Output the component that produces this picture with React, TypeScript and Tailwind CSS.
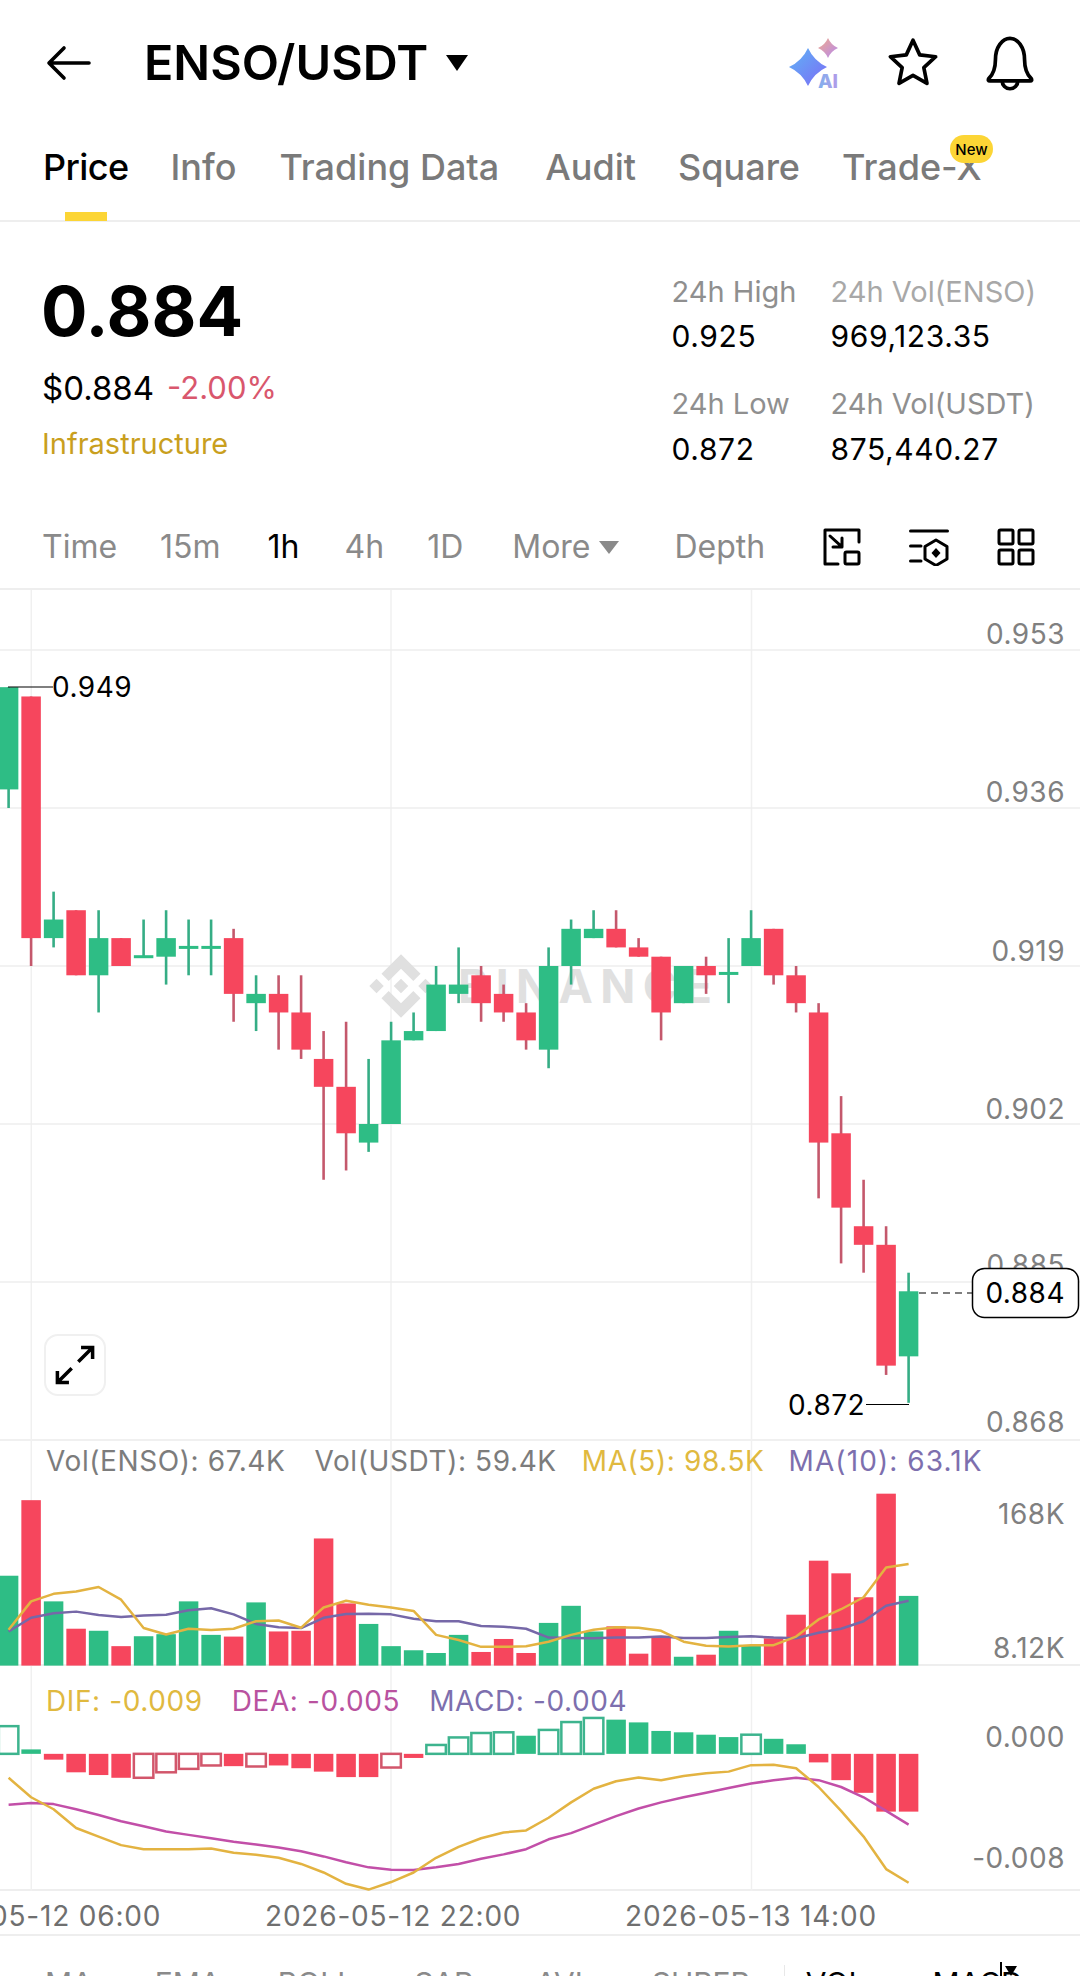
import React from 'react';

type C = [number, number, number, number, number];
// [open, close, high, low, up?1:0], prices in thousandths
const candles: C[] = [
  [938, 949, 949, 936, 1], [948, 922, 948, 919, 0], [922, 924, 927, 921, 1], [925, 918, 925, 918, 0], [918, 922, 925, 914, 1],
  [922, 919, 922, 919, 0], [920, 920, 924, 920, 1], [920, 922, 925, 917, 1], [921, 921, 924, 918, 1], [921, 921, 924, 918, 1],
  [922, 916, 923, 913, 0], [915, 916, 918, 912, 1], [916, 914, 918, 910, 0], [914, 910, 918, 909, 0], [909, 906, 912, 896, 0],
  [906, 901, 913, 897, 0], [900, 902, 909, 899, 1], [902, 911, 913, 902, 1], [911, 912, 914, 911, 1], [912, 917, 919, 912, 1],
  [916, 917, 921, 915, 1], [918, 915, 919, 913, 0], [916, 914, 917, 913, 0], [914, 911, 915, 910, 0], [910, 919, 921, 908, 1],
  [919, 923, 924, 917, 1], [922, 923, 925, 922, 1], [923, 921, 925, 921, 0], [921, 920, 922, 920, 0], [920, 914, 920, 911, 0],
  [915, 919, 919, 915, 1], [919, 918, 920, 916, 0], [918.2, 918.2, 922, 915, 1], [919, 922, 925, 919, 1], [923, 918, 923, 917, 0],
  [918, 915, 919, 914, 0], [914, 900, 915, 894, 0], [901, 893, 905, 887, 0], [891, 889, 896, 886, 0], [889, 876, 891, 875, 0],
  [877, 884, 886, 872, 1],
];
const volTops = [397, 176, 472, 552, 558, 603, 574, 568, 472, 570, 575, 475, 560, 558, 288, 478, 538, 603, 615, 623, 570, 620, 582, 623, 535, 485, 560, 545, 625, 578, 634, 628, 558, 600, 580, 511, 353, 390, 460, 157, 456];
const ma5 = [555, 472, 450, 443, 430, 467, 550, 569, 552, 556, 552, 530, 528, 549, 490, 470, 482, 490, 500, 570, 585, 605, 605, 603, 590, 570, 555, 548, 549, 558, 590, 602, 604, 600, 600, 575, 525, 495, 460, 373, 363];
const ma10 = [560, 520, 507, 502, 512, 518, 513, 511, 498, 492, 510, 538, 548, 550, 520, 509, 508, 510, 523, 530, 530, 544, 546, 552, 578, 579, 580, 578, 578, 575, 579, 579, 576, 574, 578, 580, 564, 552, 530, 485, 470];
// [value, hollow?]
const macdBars: [number, number][] = [
  [837, 1], [905, 0], [935, 0], [972, 0], [980, 0], [988, 0], [988, 1], [972, 1], [962, 1], [952, 1], [954, 0], [955, 1], [952, 0], [960, 0], [970, 0], [986, 0], [986, 0], [958, 1], [930, 0],
  [892, 1], [870, 1], [857, 1], [855, 1], [865, 0], [848, 1], [825, 1], [813, 1], [818, 0], [826, 0], [851, 0], [855, 0], [862, 0], [869, 0], [862, 1], [874, 0], [890, 0], [943, 0], [995, 0], [1032, 0], [1087, 0], [1087, 0],
];
const dif = [988, 1045, 1080, 1135, 1160, 1185, 1197, 1197, 1197, 1195, 1207, 1213, 1222, 1240, 1265, 1298, 1315, 1293, 1265, 1222, 1190, 1165, 1148, 1142, 1105, 1060, 1020, 998, 987, 995, 983, 975, 970, 951, 950, 960, 1015, 1085, 1160, 1255, 1295];
const dea = [1067, 1062, 1065, 1080, 1097, 1115, 1130, 1145, 1155, 1165, 1175, 1183, 1192, 1203, 1218, 1235, 1250, 1257, 1258, 1250, 1240, 1225, 1212, 1197, 1168, 1150, 1125, 1100, 1078, 1060, 1045, 1032, 1018, 1005, 995, 988, 995, 1015, 1045, 1085, 1125];

const GREEN = '#2EBD85';
const RED = '#F6465D';
const WICK_G = '#35AD85';
const WICK_R = '#C4586C';
const cx = (i: number) => 8.6 + i * 22.5;
const BW = 19.5;
const priceY = (p: number) => (953 - p) * 9.294 + 60;
const subY = (v: number) => v / 2.925 - 1;
const line = (arr: number[], off: number) => arr.map((v, i) => `${cx(i)},${subY(v) - off}`).join(' ');
const FONT = 'font-["Inter","Liberation_Sans",sans-serif]';

const VLines = ({ h }: { h: number }) => (
  <g stroke="#f0f0f0" strokeWidth="1.5">
    {[31.3, 391, 751.5].map((x) => (
      <line key={x} x1={x} x2={x} y1={0} y2={h} />
    ))}
  </g>
);

const AxisLabel = ({ y, t, fill = '#808080' }: { y: number; t: string; fill?: string }) => (
  <text x={1065} y={y} textAnchor="end" dominantBaseline="central" fontSize="28" letterSpacing="0.5" fill={fill} fontFamily="Inter, sans-serif">
    {t}
  </text>
);

function MainChart() {
  return (
    <div className="relative h-[851px] w-full border-b-2 border-[#f0f0f0]">
      <svg width="1080" height="851" className="block">
        <VLines h={851} />
        <g stroke="#eeeeee" strokeWidth="1.5">
          {[649, 807, 965, 1123, 1281].map((y) => (
            <line key={y} x1={0} x2={1080} y1={y - 589} y2={y - 589} />
          ))}
        </g>
        <g transform="translate(369,364) scale(0.508)" fill="#e0e0e0">
          <path d="M38.73 53.2L63 28.93l24.28 24.28 14.12-14.12L63 .69 24.61 39.08zM.69 63l14.12-14.12L28.93 63 14.81 77.12zM38.73 72.8L63 97.07l24.28-24.28 14.12 14.12L63 125.31 24.61 86.92l-.02-.02zM97.07 63l14.12-14.12L125.31 63l-14.12 14.12zM77.32 63L63 48.68 52.41 59.27l-1.22 1.22-2.51 2.51L63 77.32z" />
        </g>
        <text x={458} y={413} fontSize="46" fontWeight="700" fill="#e0e0e0" textLength={254} fontFamily="Inter, sans-serif">
          BINANCE
        </text>
        {candles.map(([o, c, h, l, up], i) => {
          const top = priceY(Math.max(o, c));
          const bh = Math.max(Math.abs(o - c) * 9.294, 3);
          return (
            <g key={i}>
              <line x1={cx(i)} x2={cx(i)} y1={priceY(h)} y2={priceY(l)} stroke={up ? WICK_G : WICK_R} strokeWidth="2.6" />
              <rect x={cx(i) - BW / 2} y={o === c ? top - 1.5 : top} width={BW} height={bh} fill={up ? GREEN : RED} />
            </g>
          );
        })}
        <line x1={8} x2={53} y1={97} y2={97} stroke="#000" strokeWidth="1.2" />
        <text x={52} y={97} dominantBaseline="central" fontSize="28" letterSpacing="0.5" fill="#000" fontFamily="Inter, sans-serif">0.949</text>
        <line x1={866} x2={909} y1={814.5} y2={814.5} stroke="#000" strokeWidth="1.2" />
        <text x={788} y={815} dominantBaseline="central" fontSize="28" letterSpacing="0.5" fill="#000" fontFamily="Inter, sans-serif">0.872</text>
        <AxisLabel y={44} t="0.953" />
        <AxisLabel y={202} t="0.936" />
        <AxisLabel y={361} t="0.919" />
        <AxisLabel y={519} t="0.902" />
        <AxisLabel y={675} t="0.885" />
        <AxisLabel y={832} t="0.868" />
        <line x1={919} x2={972} y1={703} y2={703} stroke="#000" strokeWidth="1.2" strokeDasharray="7 5" />
        <rect x={972.5} y={678.5} width={106} height={49} rx={12} fill="#fff" stroke="#000" strokeWidth="1.5" />
        <AxisLabel y={703} t="0.884" fill="#000" />
      </svg>
      <div className="absolute left-[44px] top-[744px] flex h-[62px] w-[62px] items-center justify-center rounded-[14px] border-2 border-[#f0f0f0] bg-white">
        <svg width="44" height="44" viewBox="0 0 40 40" fill="none" stroke="#000" strokeWidth="3.2">
          <path d="M23 17L36 4M25.5 4H36V14.5M17 23L4 36M4 25.5V36H14.5" />
        </svg>
      </div>
    </div>
  );
}

function VolumePanel() {
  return (
    <div className="relative h-[225px] w-full border-b-2 border-[#eeeeee]">
      <svg width="1080" height="225" className="block">
        <VLines h={225} />
        {volTops.map((t, i) => (
          <rect key={i} x={cx(i) - BW / 2} y={subY(t)} width={BW} height={224.6 - subY(t)} fill={candles[i][4] ? GREEN : RED} />
        ))}
        <polyline points={line(ma10, 0)} fill="none" stroke="#7668A8" strokeWidth="2.5" strokeLinejoin="round" />
        <polyline points={line(ma5, 0)} fill="none" stroke="#E3B341" strokeWidth="2.5" strokeLinejoin="round" />
        <AxisLabel y={73} t="168K" />
        <AxisLabel y={207} t="8.12K" />
      </svg>
      <div className="absolute left-[46px] top-[4px] flex text-[28px] leading-[32px] tracking-[0.6px] text-[#7c7c7c]">
        <span>Vol(ENSO): 67.4K</span>
        <span className="ml-[29px]">Vol(USDT): 59.4K</span>
        <span className="ml-[25px] text-[#E0B93F]">MA(5): 98.5K</span>
        <span className="ml-[24px] tracking-[1.1px] text-[#7D6FAE]">MA(10): 63.1K</span>
      </div>
    </div>
  );
}

function MacdPanel() {
  const zero = subY(918) - 225;
  return (
    <div className="relative h-[225px] w-full border-b-2 border-[#eeeeee]">
      <svg width="1080" height="225" className="block">
        <VLines h={225} />
        {macdBars.map(([v, hollow], i) => {
          const y = subY(v) - 225;
          const top = Math.min(y, zero);
          const h = Math.abs(y - zero);
          const col = v < 918 ? GREEN : RED;
          return hollow ? (
            <rect key={i} x={cx(i) - BW / 2} y={top} width={BW} height={h} fill="#fff" stroke={v < 918 ? '#3DB48E' : '#D2566B'} strokeWidth="2.5" />
          ) : (
            <rect key={i} x={cx(i) - BW / 2} y={top} width={BW} height={h} fill={col} />
          );
        })}
        <polyline points={line(dea, 225)} fill="none" stroke="#C24FA8" strokeWidth="2.5" strokeLinejoin="round" />
        <polyline points={line(dif, 225)} fill="none" stroke="#E3B341" strokeWidth="2.5" strokeLinejoin="round" />
        <AxisLabel y={71} t="0.000" />
        <AxisLabel y={192} t="-0.008" />
      </svg>
      <div className="absolute left-[46px] top-[19px] flex gap-[29px] text-[28px] leading-[32px] tracking-[0.6px]">
        <span className="text-[#E0B93F]">DIF: -0.009</span>
        <span className="text-[#B9529F]">DEA: -0.005</span>
        <span className="text-[#7D6FAE]">MACD: -0.004</span>
      </div>
    </div>
  );
}

function AiIcon() {
  return (
    <svg width="56" height="62" viewBox="0 0 56 62">
      <defs>
        <linearGradient id="ai1" x1="0" y1="0" x2="1" y2="1">
          <stop offset="0" stopColor="#5FB4F5" />
          <stop offset="1" stopColor="#7C6CF6" />
        </linearGradient>
        <linearGradient id="ai2" x1="0" y1="0" x2="1" y2="1">
          <stop offset="0" stopColor="#F0A98C" />
          <stop offset="1" stopColor="#B58AF0" />
        </linearGradient>
        <linearGradient id="ai3" x1="0" y1="0" x2="1" y2="0">
          <stop offset="0" stopColor="#7FB1EE" />
          <stop offset="1" stopColor="#B39AE8" />
        </linearGradient>
      </defs>
      <path d="M21 16 Q27 29 40 35 Q27 41 21 54 Q15 41 2 35 Q15 29 21 16Z" fill="url(#ai1)" />
      <path d="M41 6 Q44 13 51 16 Q44 19 41 26 Q38 19 31 16 Q38 13 41 6Z" fill="url(#ai2)" />
      <text x={31} y={56} fontSize="19" fontWeight="800" fill="url(#ai3)" fontFamily="Inter, sans-serif">AI</text>
    </svg>
  );
}

export default function App() {
  return (
    <div className={`h-[1976px] w-[1080px] overflow-hidden bg-white ${FONT}`}>
      {/* top bar */}
      <div className="flex h-[126px] items-center pl-[46px] pr-[43px]">
        <svg width="46" height="36" viewBox="0 0 46 36" fill="none" stroke="#000" strokeWidth="3.6" strokeLinecap="round" strokeLinejoin="round">
          <path d="M43 18H4M18 3L3 18L18 33" />
        </svg>
        <span className="ml-[52px] text-[48.5px] font-semibold leading-none text-black">ENSO/USDT</span>
        <svg className="ml-[17px]" width="24" height="16" viewBox="0 0 24 16">
          <path d="M1 0H23L12 16Z" fill="#000" />
        </svg>
        <div className="ml-auto flex items-center">
          <AiIcon />
          <svg className="ml-[44px]" width="52" height="52" viewBox="0 0 48 48" fill="none" stroke="#000" strokeWidth="3.4" strokeLinejoin="round">
            <path d="M24 3L30.2 16.5L44.9 18.2L34 28.2L36.9 42.8L24 35.5L11.1 42.8L14 28.2L3.1 18.2L17.8 16.5Z" />
          </svg>
          <svg className="ml-[44px]" width="54" height="56" viewBox="0 0 48 50" fill="none" stroke="#000" strokeWidth="3.3" strokeLinejoin="round">
            <path d="M5 39Q11 33 11 22C11 11 17 3 24 3C31 3 37 11 37 22Q37 33 43 39Q44 41 42 41H6Q4 41 5 39Z" />
            <path d="M17 41A7 7 0 0 0 31 41" />
          </svg>
        </div>
      </div>

      {/* tabs */}
      <div className="flex h-[96px] border-b-2 border-[#eeeeee] pl-[43px] text-[36px] font-medium leading-[44px] text-[#7a7a7a]">
        <div className="relative pt-[19px] tracking-[-0.6px] text-black">
          Price
          <div className="absolute left-[22px] top-[86px] h-[9px] w-[42px] bg-[#FCD535]" />
        </div>
        <div className="ml-[42px] pt-[19px]">Info</div>
        <div className="ml-[43px] pt-[19px]">Trading Data</div>
        <div className="ml-[46px] pt-[19px]">Audit</div>
        <div className="ml-[42px] pt-[19px]">Square</div>
        <div className="relative ml-[42px] pt-[19px]">
          Trade-X
          <div className="absolute left-[108px] top-[9px] flex h-[28px] w-[43px] items-center justify-center rounded-[14px] bg-[#FCD535] text-[15px] font-medium leading-none text-black">
            New
          </div>
        </div>
      </div>

      {/* price stats */}
      <div className="flex h-[284px] justify-between pl-[41px] pr-[44px]">
        <div className="pt-[54px]">
          <div className="text-[69px] font-bold leading-[70px] text-black">0.884</div>
          <div className="ml-[1px] mt-[22px] flex items-center gap-[13px] leading-[40px]">
            <span className="text-[33px] text-black">$0.884</span>
            <span className="text-[31px] text-[#D9576D]">-2.00%</span>
          </div>
          <div className="ml-[1px] mt-[18px] text-[29px] leading-[36px] text-[#C99F1E]">Infrastructure</div>
        </div>
        <div className="grid grid-cols-[159px_auto] content-start pt-[52px] text-[29px] leading-[36px]">
          <div className="text-[#8f8f8f]">24h High</div>
          <div className="text-[#a8a8a8]">24h Vol(ENSO)</div>
          <div className="mt-[8px] text-[30px] tracking-[0.6px] text-black">0.925</div>
          <div className="mt-[8px] text-[30px] tracking-[0.6px] text-black">969,123.35</div>
          <div className="mt-[32px] text-[#8f8f8f]">24h Low</div>
          <div className="mt-[32px] text-[#8f8f8f]">24h Vol(USDT)</div>
          <div className="mt-[9px] text-[30px] tracking-[0.6px] text-black">0.872</div>
          <div className="mt-[9px] text-[30px] tracking-[0.6px] text-black">875,440.27</div>
        </div>
      </div>

      {/* interval row */}
      <div className="flex h-[84px] items-center border-b-2 border-[#eeeeee] pl-[42px] pr-[45px] text-[32px] leading-none text-[#8a8a8a]">
        <span>Time</span>
        <span className="ml-[43px]">15m</span>
        <span className="ml-[47px] text-black">1h</span>
        <span className="ml-[45px]">4h</span>
        <span className="ml-[43px]">1D</span>
        <span className="ml-[49px]">More</span>
        <svg className="ml-[8px]" width="20" height="13" viewBox="0 0 20 13">
          <path d="M0 0H20L10 13Z" fill="#8a8a8a" />
        </svg>
        <span className="ml-[56px]">Depth</span>
        <div className="ml-auto flex items-center gap-[48px]">
          <svg width="38" height="38" viewBox="0 0 38 38" fill="none" stroke="#000" strokeWidth="3" strokeLinecap="round" strokeLinejoin="round">
            <path d="M36 14V2H2V36H15" />
            <path d="M7 8L18.7 18.7M19 10V19H10" />
            <rect x="22" y="24" width="14" height="12" rx="1.5" />
          </svg>
          <svg width="40" height="38" viewBox="0 0 40 38" fill="none" stroke="#000" strokeWidth="3" strokeLinecap="round" strokeLinejoin="round">
            <path d="M1.5 3H38.5M1.5 18H12M1.5 33H12" />
            <path d="M27 12L38 18.5V31L27 37.5L16 31V18.5Z" />
            <path d="M27 20L31.5 25L27 30L22.5 25Z" fill="#000" stroke="none" />
          </svg>
          <svg width="38" height="38" viewBox="0 0 38 38" fill="none" stroke="#000" strokeWidth="3" strokeLinejoin="round">
            <rect x="2" y="2" width="14" height="14" rx="1.5" />
            <rect x="22" y="2" width="14" height="14" rx="1.5" />
            <rect x="2" y="22" width="14" height="14" rx="1.5" />
            <rect x="22" y="22" width="14" height="14" rx="1.5" />
          </svg>
        </div>
      </div>

      <MainChart />
      <VolumePanel />
      <MacdPanel />

      {/* date axis */}
      <div className="relative h-[45px] border-b-2 border-[#eeeeee] text-[28px] leading-[51px] tracking-[0.8px] text-[#6f6f6f]">
        <span className="absolute left-[-96px]">2026-05-12 06:00</span>
        <span className="absolute left-[265px]">2026-05-12 22:00</span>
        <span className="absolute left-[625px]">2026-05-13 14:00</span>
      </div>

      {/* indicators row, cut off by the bottom of the window */}
      <div className="relative flex h-[60px] pl-[45px] pt-[29px] text-[30px] leading-[36px] text-[#8a8a8a]">
        <span>MA</span>
        <span className="ml-[62px]">EMA</span>
        <span className="ml-[57px]">BOLL</span>
        <span className="ml-[60px]">SAR</span>
        <span className="ml-[62px]">AVL</span>
        <span className="ml-[60px]">SUPER</span>
        <div className="ml-[34px] h-[30px] w-[1px] bg-[#e8e8e8]" />
        <span className="ml-[21px] text-black">VOL</span>
        <span className="ml-[67px] text-black">MACD</span>
        <div className="absolute left-[1000px] top-[26px] h-[20px] w-[2px] bg-black" />
        <svg className="absolute left-[1005px] top-[30px]" width="12" height="10" viewBox="0 0 12 10">
          <path d="M0 0H12L6 10Z" fill="#000" />
        </svg>
      </div>
    </div>
  );
}
